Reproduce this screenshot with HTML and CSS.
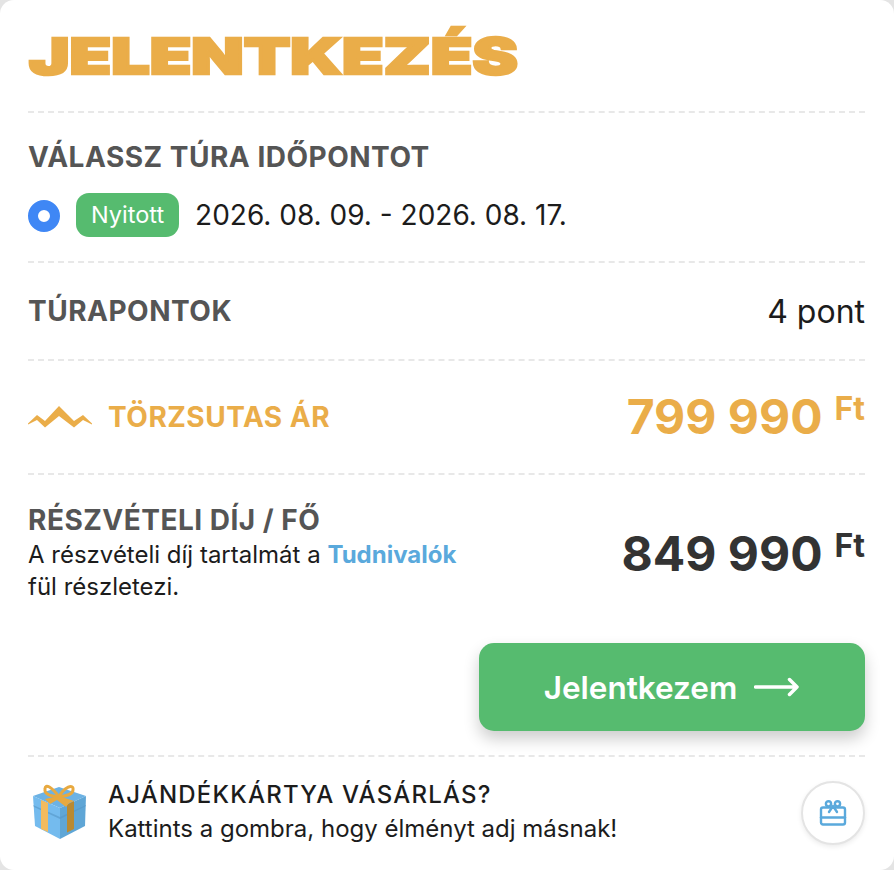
FILE: index.html
```html
<!DOCTYPE html>
<html lang="hu">
<head>
<meta charset="utf-8">
<title>Jelentkezés</title>
<link rel="stylesheet" href="styles.css">
</head>
<body>
<div class="card">
	<div class="head">
		<h1 class="title">JELENTKEZÉS</h1>
	</div>
	<div class="section dates">
		<h2 class="label">VÁLASSZ TÚRA IDŐPONTOT</h2>
		<div class="date-row">
			<span class="radio"></span>
			<span class="badge">Nyitott</span>
			<span class="date">2026. 08. 09. - 2026. 08. 17.</span>
		</div>
	</div>
	<div class="section row points">
		<h2 class="label">TÚRAPONTOK</h2>
		<span class="value">4 pont</span>
	</div>
	<div class="section row member">
		<div class="member-label">
			<svg class="peaks" width="66" height="22" viewBox="0 0 66 22">
				<path d="M0 17.500 L9 9 L17 15 L31 0 L46 15 L55 9 L64 17.500 L64 18.500 L55 14 L46 21.500 L31 10 L17 21.500 L9 14 L0 18.500 Z" fill="#eaad49"/>
			</svg>
			<h2 class="label gold">TÖRZSUTAS ÁR</h2>
		</div>
		<div class="price gold">799 990<sup>Ft</sup></div>
	</div>
	<div class="fee">
		<div class="fee-text">
			<h2 class="label">RÉSZVÉTELI DÍJ / FŐ</h2>
			<p>A részvételi díj tartalmát a <a href="#">Tudnivalók</a> fül részletezi.</p>
		</div>
		<div class="price">849 990<sup>Ft</sup></div>
	</div>
	<div class="actions">
		<button class="apply">Jelentkezem
			<svg width="46" height="20" viewBox="0 0 46 20" fill="none" stroke="#fff" stroke-width="3.500" stroke-linecap="round" stroke-linejoin="round">
				<path d="M1.500 10 H43 M35.500 2.500 L43 10 L35.500 17.500"/>
			</svg>
		</button>
	</div>
	<div class="gift">
		<svg class="gift-box" width="60" height="60" viewBox="0 0 60 60">
			<path d="M3 13 L29 4 L56 13 L30 25 Z" fill="#6cb2e4"/>
			<path d="M3 13 L30 25 L30 56 L5 43 Z" fill="#74bbee"/>
			<path d="M56 13 L30 25 L30 56 L55 43 Z" fill="#5fa6d6"/>
			<path d="M3 22 L30 34 L56 22 L56 23 L30 36 L4 24 Z" fill="#5596c6" opacity=".6"/>
			<path d="M11 17 L18 20 L18 49 L11 46 Z" fill="#f3bb5e"/>
			<path d="M37 21.500 L44 18 L44 46 L37 49.500 Z" fill="#b98a32"/>
			<path d="M29 14 C22 4 15 0 15 6 C14 12 22 13 29 14 Z" fill="none" stroke="#e8a93f" stroke-width="3"/>
			<path d="M29 14 C34 4 44 0 43 7 C43 12 35 13 29 14 Z" fill="none" stroke="#e8a93f" stroke-width="3"/>
			<path d="M29 13 L15 16 L20 21 L27 17 L36 24 L39 20 L44 18 Z" fill="#e8a93f"/>
		</svg>
		<div class="gift-text">
			<h3>AJÁNDÉKKÁRTYA VÁSÁRLÁS?</h3>
			<p>Kattints a gombra, hogy élményt adj másnak!</p>
		</div>
		<button class="gift-btn">
			<svg width="28" height="26" viewBox="0 0 28 26" fill="none" stroke="#5aa9dc" stroke-width="2.400" stroke-linejoin="round" stroke-linecap="round">
				<rect x="2" y="7.500" width="24" height="17" rx="2"/>
				<path d="M2 17.500 H26"/>
				<circle cx="9.500" cy="3.800" r="2.600"/>
				<circle cx="18.500" cy="3.800" r="2.600"/>
				<path d="M14 6 L10 12 M14 6 L18 12"/>
			</svg>
		</button>
	</div>
</div>
</body>
</html>
```

FILE: styles.css
```css
* {
	box-sizing: border-box;
}
html, body {
	margin: 0;
	padding: 0;
}
body {
	background-color: #e4e4e4;
	font-family: Inter, "Noto Sans", sans-serif;
	color: #1c1c1c;
	overflow: hidden;
}
.card {
	width: 894px;
	height: 870px;
	background-color: #fff;
	border-radius: 14px;
	padding: 0 29px 0 28px;
	overflow: hidden;
}
.head {
	height: 113px;
	border-bottom: 2px dashed #e8e8e8;
	padding-top: 26px;
}
.title {
	margin: 0 0 0 1px;
	font-size: 50px;
	line-height: 60px;
	font-weight: 900;
	color: #eaad49;
	-webkit-text-stroke: 2.500px #eaad49;
	transform: scaleX(1.36);
	transform-origin: left center;
	white-space: nowrap;
}
.section {
	border-bottom: 2px dashed #e8e8e8;
}
.label {
	margin: 0;
	font-size: 28px;
	line-height: 32px;
	font-weight: 700;
	letter-spacing: .5px;
	color: #555;
}
.label.gold {
	color: #eaad49;
}
.dates {
	height: 150px;
	padding-top: 28px;
}
.date-row {
	display: flex;
	align-items: center;
	margin-top: 20px;
}
.radio {
	width: 32px;
	height: 32px;
	border-radius: 50%;
	border: 10px solid #3f87f5;
	background-color: #fff;
	margin-top: 2px;
}
.badge {
	margin-left: 16px;
	height: 44px;
	padding: 0 15px;
	background-color: #56bb6f;
	color: #fff;
	border-radius: 13px;
	font-size: 23.500px;
	line-height: 44px;
}
.date {
	margin-left: 16px;
	font-size: 28px;
}
.row {
	display: flex;
	align-items: center;
	justify-content: space-between;
}
.points {
	height: 98px;
}
.value {
	font-size: 32px;
}
.member {
	height: 114px;
}
.member-label {
	display: flex;
	align-items: center;
	gap: 14px;
}
.price {
	font-size: 48px;
	line-height: 60px;
	font-weight: 700;
	color: #333;
	white-space: nowrap;
}
.price.gold {
	color: #eaad49;
}
.price sup {
	font-size: 32px;
	line-height: 0;
	margin-left: 12px;
	vertical-align: 14px;
}
.fee {
	display: flex;
	justify-content: space-between;
	align-items: center;
	padding-top: 29px;
}
.fee-text {
	width: 440px;
}
.fee-text p {
	margin: 3px 0 0;
	font-size: 24px;
	line-height: 32px;
}
.fee-text a {
	color: #5aa9dc;
	font-weight: 700;
	text-decoration: none;
}
.actions {
	display: flex;
	justify-content: flex-end;
	margin-top: 40px;
}
.apply {
	width: 386px;
	height: 88px;
	border: 0;
	border-radius: 15px;
	background-color: #56bb6f;
	color: #fff;
	font-family: inherit;
	font-size: 31.500px;
	font-weight: 600;
	box-shadow: 0 8px 16px rgba(0, 0, 0, .2);
	display: flex;
	align-items: center;
	justify-content: center;
	gap: 17px;
}
.gift {
	margin-top: 24px;
	border-top: 2px dashed #e8e8e8;
	display: flex;
	align-items: center;
	height: 114px;
}
.gift-box {
	margin: 0 18px 0 2px;
}
.gift-text {
	flex: 1;
	margin-bottom: 2px;
}
.gift-text h3 {
	margin: 0;
	font-size: 24px;
	line-height: 34px;
	font-weight: 500;
	letter-spacing: 1.200px;
}
.gift-text p {
	margin: 0;
	font-size: 24px;
	line-height: 34px;
}
.gift-btn {
	width: 64px;
	height: 64px;
	border-radius: 50%;
	border: 2px solid #e4e4e4;
	background-color: #fff;
	box-shadow: 0 2px 5px rgba(0, 0, 0, .08);
	padding: 0;
	display: flex;
	align-items: center;
	justify-content: center;
}
```
